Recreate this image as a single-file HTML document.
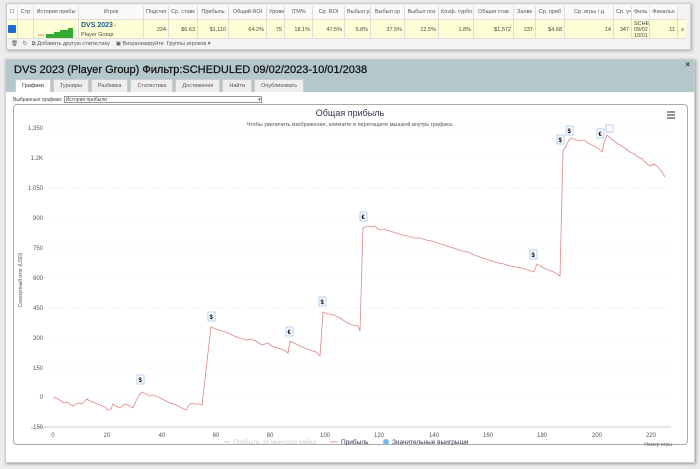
<!DOCTYPE html>
<html><head><meta charset="utf-8">
<style>
*{box-sizing:border-box;margin:0;padding:0}
body{width:700px;height:469px;background:#ececec;font-family:"Liberation Sans",sans-serif;position:relative;overflow:hidden;font-size:6px;color:#333}
.top{position:absolute;left:6px;top:3px;width:685px;height:47px;background:#f3f3f3;border:1px solid #ccc;box-shadow:1px 1px 3px #aaa}
.hdr,.row{position:absolute;left:0;display:flex}
.hdr{top:2px;height:13px;background:#fafafa}
.row{top:15px;height:20px;background:#ffffd6;border-top:1px solid #ddd;border-bottom:1px solid #ddd}
.hdr div,.row div{border-right:1px solid #ddd;white-space:nowrap;overflow:hidden;font-size:5.5px;line-height:13px;padding:0 2px;color:#555}
.hdr div{text-align:center}
.row div{text-align:right;line-height:20px;color:#444}
.tb{position:absolute;top:37px;left:4px;font-size:5.5px;color:#555}
.dlg{position:absolute;left:5px;top:59px;width:690px;height:404px;background:#fff;border:1px solid #ccc;box-shadow:1px 1px 3px #999}
.dh{height:32px;background:#b3c7cc;position:relative}
.dh h1{position:absolute;left:8px;top:4px;font-size:11px;font-weight:normal;color:#111;-webkit-text-stroke:0.25px #111}
.tabs{position:absolute;left:9px;top:19px;display:flex}
.tabs div{font-size:5.5px;color:#555;background:#eee;border:1px solid #ccc;border-bottom:none;margin-right:2px;padding:0 6px;height:13px;line-height:13px}
.tabs div.a{background:#fff;color:#333}
.chart{position:absolute;left:13px;top:104px;width:675px;height:341px;border:1px solid #aaa;border-radius:4px}
</style></head><body>
<div class="top">
<div class="hdr">
<div style="width:11px">☐</div><div style="width:16px">Стр</div><div style="width:45px">История прибы</div><div style="width:65px">Игрок</div><div style="width:25px">Подсчет</div><div style="width:29px">Ср. ставк</div><div style="width:31px">Прибыль</div><div style="width:38px">Общий ROI</div><div style="width:18px">Урове</div><div style="width:28px">ITM%</div><div style="width:32px">Ср. ROI</div><div style="width:26px">Выбыл ра</div><div style="width:34px">Выбыл ср</div><div style="width:34px">Выбыл поз</div><div style="width:35px">Коэф. турбо</div><div style="width:40px">Общая став</div><div style="width:22px">Залвк</div><div style="width:29px">Ср. приб</div><div style="width:49px">Ср. игры / д</div><div style="width:18px">Ср. учас</div><div style="width:18px">Филь</div><div style="width:28px">Финальн</div>
</div>
<div class="row">
<div style="width:11px;padding:0"><span style="display:block;margin:5px 1px;width:8px;height:8px;background:#1a6fd0;border-radius:1px"></span></div><div style="width:16px"></div>
<div style="width:45px;position:relative"><svg width="40" height="20" style="position:absolute;left:2px;top:0"><path d="M2 15h6" stroke="#d88" stroke-width="1"/><path d="M10 14h8v-2h6v-2h8v-2h5v12H10z" fill="#3a3"/></svg></div>
<div style="width:65px;text-align:left;line-height:9px;padding-top:1px"><b style="color:#1a5a9a;font-size:7px">DVS 2023</b> <span style="color:#bb3">▪</span><br>Player Group</div>
<div style="width:25px">224</div><div style="width:29px">$6.63</div><div style="width:31px">$1,110</div><div style="width:38px">64.2%</div><div style="width:18px">75</div><div style="width:28px">18.1%</div><div style="width:32px">47.5%</div><div style="width:26px">5.8%</div><div style="width:34px">37.5%</div><div style="width:34px">12.5%</div><div style="width:35px">1.8%</div><div style="width:40px">$1,572</div><div style="width:22px">237</div><div style="width:29px">$4.68</div><div style="width:49px">14</div><div style="width:18px">347</div><div style="width:18px;text-align:left;line-height:6px;padding-top:1px">SCHEI<br>09/02<br>10/01</div><div style="width:28px">11</div><div style="width:8px;border:none">≥</div>
</div>
<div class="tb">🗑 &nbsp; ↻ &nbsp; ⧉ Добавить другую статистику &nbsp;&nbsp; ▣ Визуализируйте &nbsp;Группы игроков ▾</div>
</div>
<div class="dlg">
<div class="dh"><h1>DVS 2023 (Player Group) Фильтр:SCHEDULED 09/02/2023-10/01/2038</h1><span style="position:absolute;right:4px;top:0;font-size:8px;font-weight:bold">×</span>
<div class="tabs"><div class="a">Графики</div><div>Турниры</div><div>Разбивка</div><div>Статистика</div><div>Достижения</div><div>Найти</div><div>Опубликовать</div></div></div>
<div style="position:absolute;left:7px;top:36px;font-size:5px;color:#444">Выбранные графики: <span style="display:inline-block;width:198px;border:1px solid #999;height:7px;line-height:6px;vertical-align:middle;padding-left:1px">История прибыли<span style="float:right">▾</span></span></div>
</div>
<div class="chart"></div>
<svg width="700" height="469" style="position:absolute;left:0;top:0" font-family="Liberation Sans,sans-serif">
<text x="350" y="116" font-size="9" fill="#335" text-anchor="middle">Общая прибыль</text>
<text x="350" y="126" font-size="5.5" fill="#555" text-anchor="middle">Чтобы увеличить изображение, кликните и перетащите мышкой внутрь графика.</text>
<path d="M667 112h8M667 115h8M667 118h8" stroke="#555" stroke-width="1.3"/>
<g stroke="#ddd" stroke-width="0.6" stroke-dasharray="1,1.5">
<path d="M48 128H670M48 158H670M48 188H670M48 218H670M48 248H670M48 278H670M48 308H670M48 338H670M48 368H670M48 397H670"/></g>
<path d="M38 427H671" stroke="#ccc" stroke-width="1"/>
<g font-size="6" fill="#555" text-anchor="end">
<text x="43" y="130">1,350</text><text x="43" y="160">1.2K</text><text x="43" y="190">1,050</text><text x="43" y="220">900</text><text x="43" y="250">750</text><text x="43" y="280">600</text><text x="43" y="310">450</text><text x="43" y="340">300</text><text x="43" y="370">150</text><text x="43" y="399">0</text><text x="43" y="429">-150</text></g>
<g font-size="6" fill="#555" text-anchor="middle">
<text x="53" y="437">0</text><text x="107" y="437">20</text><text x="162" y="437">40</text><text x="216" y="437">60</text><text x="270" y="437">80</text><text x="325" y="437">100</text><text x="379" y="437">120</text><text x="434" y="437">140</text><text x="488" y="437">160</text><text x="542" y="437">180</text><text x="597" y="437">200</text><text x="651" y="437">220</text></g>
<text x="22" y="280" font-size="5" fill="#555" transform="rotate(-90 22 280)" text-anchor="middle">Совокупный итог (USD)</text>
<text x="672" y="446" font-size="5" fill="#666" text-anchor="end">Номер игры</text>
<g font-size="6.5"><path d="M224 442h6" stroke="#ccc"/><text x="233" y="444" fill="#ccc">Прибыль за минусом рейка</text>
<path d="M330 442h8" stroke="#d99"/><text x="341" y="444" fill="#335">Прибыль</text>
<circle cx="386" cy="442" r="3" fill="#7cb5ec"/><text x="392" y="444" fill="#335">Значительные выигрыши</text></g>
<polyline fill="none" stroke="#d88" stroke-width="0.8" points="53,397 58,399 61,401 64,403 67,402 70,404 73,406 76,404 79,403 82,404 85,401 87,399 90,401 95,403 100,405 105,407 108,410 111,409 113,404 116,406 120,408 123,405 126,404 130,406 133,408 136,401 139,395 142,392 146,394 150,396 153,395 158,397 162,399 166,401 170,403 174,404 178,406 182,408 186,410 189,405 192,403 195,404 198,404 200,404 202,405 211,327 216,329 222,331 228,333 234,336 240,338 246,340 250,339 256,341 262,345 265,344 268,343 272,346 278,348 284,350 288,353 290,341 294,343 298,345 304,348 310,350 316,352 320,356 323,312 328,314 334,315 340,318 346,322 352,325 358,326 360,331 363,228 368,226 372,227 375,226 378,229 380,230 384,229 390,231 396,233 402,235 408,236 414,238 420,238 426,240 432,241 438,243 444,245 450,247 456,249 462,251 468,252 474,255 480,257 486,259 492,261 498,263 504,264 510,266 516,267 522,268 528,270 534,272 537,264 542,267 548,270 554,272 560,276 563,151 566,146 569,140 572,138 576,140 580,141 584,140 588,143 592,145 596,147 600,150 602,152 604,143 607,135 610,138 614,141 618,144 622,146 626,149 630,152 634,154 638,157 642,159 646,163 650,166 654,164 658,167 662,172 665,177"/>
<g stroke="#7cb5ec" stroke-width="0.6" fill="#fff" font-size="6" font-weight="bold">
<rect x="137" y="375" width="7" height="9"/><text x="138.5" y="382" fill="#000" stroke="none">$</text>
<rect x="208" y="312" width="7" height="9"/><text x="209.5" y="319" fill="#000" stroke="none">$</text>
<rect x="286" y="327" width="7" height="9"/><text x="287.5" y="334" fill="#000" stroke="none">€</text>
<rect x="319" y="297" width="7" height="9"/><text x="320.5" y="304" fill="#000" stroke="none">$</text>
<rect x="360" y="212" width="7" height="9"/><text x="361.5" y="219" fill="#000" stroke="none">€</text>
<rect x="530" y="250" width="7" height="9"/><text x="531.5" y="257" fill="#000" stroke="none">$</text>
<rect x="557" y="135" width="7" height="9"/><text x="558.5" y="142" fill="#000" stroke="none">$</text>
<rect x="566" y="126" width="7" height="9"/><text x="567.5" y="133" fill="#000" stroke="none">$</text>
<rect x="597" y="129" width="7" height="9"/><text x="598.5" y="136" fill="#000" stroke="none">€</text>
<rect x="606" y="125" width="7" height="7"/></g>
</svg>
</body></html>
